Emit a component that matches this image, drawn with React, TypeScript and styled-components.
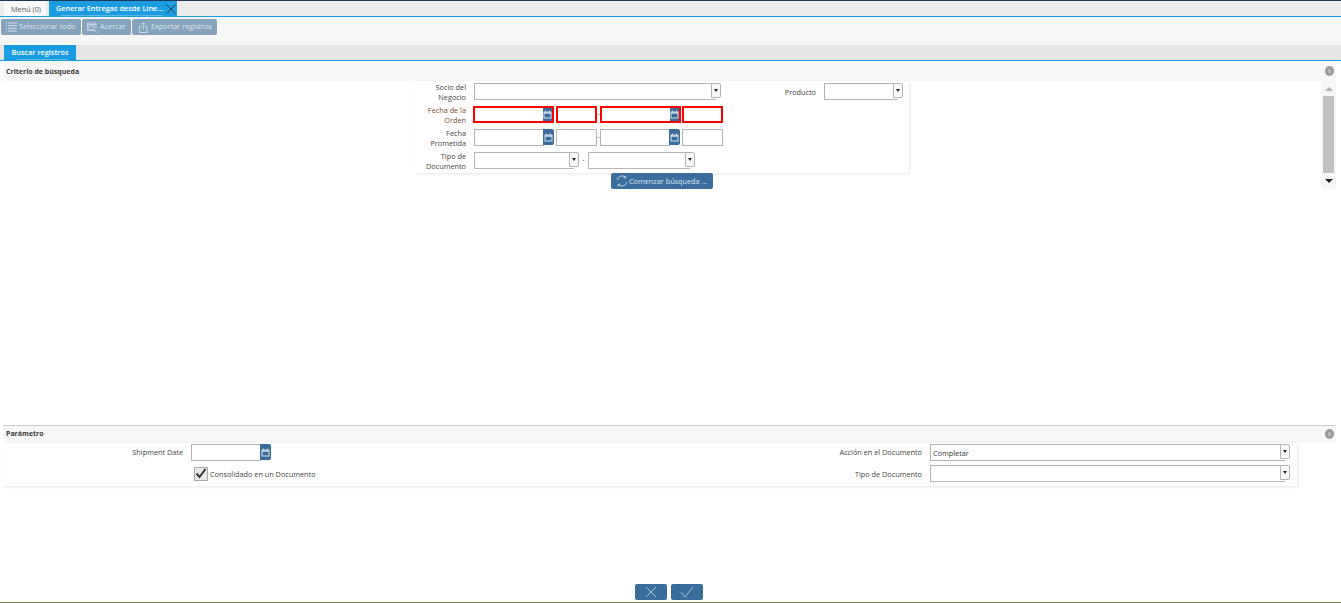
import React from "react";
import styled, { createGlobalStyle } from "styled-components";

const Global = createGlobalStyle`
  html, body { margin: 0; padding: 0; background: #fff; }
  body { font-family: "Open Sans", "Noto Sans", sans-serif; font-size: 7.3px; color: #333; }
  * { box-sizing: border-box; }
`;

const Page = styled.div`
  width: 1341px;
  height: 603px;
  display: flex;
  flex-direction: column;
  overflow: hidden;
  border-top: 1px solid #1d3a5c;
`;

const MainTabs = styled.div`
  height: 16px;
  flex: none;
  display: flex;
  gap: 3px;
  padding-left: 4px;
  background: #ececec;
  border-bottom: 1px solid #1a9ce0;
`;

const MainTab = styled.div<{ $active?: boolean }>`
  display: flex;
  align-items: center;
  justify-content: space-between;
  width: ${(p) => (p.$active ? "128px" : "42px")};
  padding-left: 7px;
  white-space: nowrap;
  background: ${(p) => (p.$active ? "#1a9ce0" : "#fafafa")};
  color: ${(p) => (p.$active ? "#fff" : "#555")};
  font-weight: ${(p) => (p.$active ? 600 : 400)};
  svg { margin-right: 1px; }
`;

const TabLabel = styled.span`
  position: relative;
  height: 100%;
  line-height: 14px;
  &::after {
    content: "";
    position: absolute;
    left: 5px;
    right: 0;
    bottom: 0;
    height: 1px;
    background: rgba(255, 255, 255, 0.3);
  }
`;

const Toolbar = styled.div`
  height: 28px;
  flex: none;
  display: flex;
  align-items: flex-start;
  gap: 1px;
  padding: 2px 0 0 1px;
  background: #f7f7f7;
`;

const ToolButton = styled.div<{ $w: number; $pad: number }>`
  width: ${(p) => p.$w}px;
  height: 16px;
  display: flex;
  align-items: center;
  gap: 2px;
  padding: 0 0 2px ${(p) => p.$pad}px;
  white-space: nowrap;
  background: #85a3bc;
  border-radius: 2px;
  color: #dfe8ef;
  svg { margin-top: 2px; }
`;

const SubTabs = styled.div`
  height: 16px;
  flex: none;
  padding-left: 4px;
  background: #e6e6e6;
  border-bottom: 1px solid #1a9ce0;
`;

const SubTab = styled.div`
  width: 72px;
  height: 15px;
  display: flex;
  justify-content: center;
  background: #1a9ce0;
  color: #fff;
  font-weight: 600;
`;

const SectionHeader = styled.div<{ $top?: boolean }>`
  height: ${(p) => (p.$top ? "18px" : "20px")};
  flex: none;
  margin: 0 5px 0 3px;
  padding: 0 0 ${(p) => (p.$top ? "2px" : "0")} 3px;
  display: flex;
  align-items: center;
  justify-content: space-between;
  background: #f7f7f7;
  font-weight: 700;
  font-size: 7px;
  color: #3a3a3a;
  border-top: ${(p) => (p.$top ? "1px solid #ccc" : "none")};
`;

const Badge = styled.span`
  width: 9px;
  height: 10px;
  margin-right: 2px;
  border-radius: 50%;
  background: #9a9a9a;
  color: #ccc;
  font-size: 5px;
  display: flex;
  align-items: center;
  justify-content: center;
`;

const SearchArea = styled.div`
  height: 344px;
  flex: none;
  display: flex;
`;

const SearchCenter = styled.div`
  flex: none;
  width: 1321px;
  display: flex;
  flex-direction: column;
  align-items: flex-start;
  padding-left: 416px;
`;

const FormCard = styled.div`
  width: 493px;
  height: 92px;
  padding: 2px 0 0 0;
  background: #fff;
  box-shadow: 1px 1px 3px rgba(0, 0, 0, 0.1);
  display: flex;
  flex-direction: column;
`;

const FormRow = styled.div<{ $h: number }>`
  display: flex;
  height: ${(p) => p.$h}px;
`;

const Label = styled.div<{ $w: number }>`
  width: ${(p) => p.$w}px;
  flex: none;
  margin-top: -1px;
  text-align: right;
  line-height: 10px;
  color: #444;
`;

const LabelRed = styled(Label)`
  margin-top: 0;
  color: #7a4a30;
`;

const InlineLabel = styled.div<{ $w: number }>`
  width: ${(p) => p.$w}px;
  flex: none;
  height: 17px;
  display: flex;
  align-items: center;
  justify-content: flex-end;
  color: #444;
`;

const Fields = styled.div<{ $red?: boolean }>`
  display: flex;
  align-items: flex-start;
  margin: ${(p) => (p.$red ? "1px 0 0 7px" : "0 0 0 8px")};
`;

const Input = styled.div<{ $w: number; $red?: boolean; $ml?: number }>`
  width: ${(p) => p.$w}px;
  height: 17px;
  margin-left: ${(p) => p.$ml ?? 0}px;
  flex: none;
  background: #fff;
  border: ${(p) => (p.$red ? "2px solid #f00" : "1px solid #b4b4b4")};
`;

const SelectBox = styled.div<{ $w: number }>`
  width: ${(p) => p.$w}px;
  height: 17px;
  flex: none;
  display: flex;
  align-items: flex-start;
`;

const SelectField = styled.div`
  flex: 1;
  height: 17px;
  border: 1px solid #b4b4b4;
  border-right: none;
  background: #fff;
  line-height: 16px;
  padding-left: 2px;
  color: #333;
`;

const SelectArrow = styled.div`
  position: relative;
  width: 10px;
  height: 15px;
  margin-left: -5px;
  flex: none;
  background: #fafafa;
  border: 1px solid #b4b4b4;
  border-radius: 0 2px 2px 0;
  display: flex;
  align-items: center;
  justify-content: center;
  &::after {
    content: "";
    border-left: 2.5px solid transparent;
    border-right: 2.5px solid transparent;
    border-top: 3px solid #222;
  }
`;

const DateBtn = styled.div<{ $red?: boolean }>`
  position: relative;
  width: ${(p) => (p.$red ? "9px" : "11px")};
  height: ${(p) => (p.$red ? "13px" : "16px")};
  margin: ${(p) => (p.$red ? "2px 2px 0 -11px" : "0 2px 0 -1px")};
  flex: none;
  overflow: hidden;
  background: #3a6c9c;
  border-radius: ${(p) => (p.$red ? "0" : "0 2px 2px 0")};
  display: flex;
  align-items: center;
  justify-content: center;
`;

const Dash = styled.span<{ $w: number }>`
  width: ${(p) => p.$w}px;
  flex: none;
  text-align: center;
  line-height: 14px;
  color: #555;
`;

const SearchButton = styled.div`
  margin-left: 195px;
  width: 102px;
  height: 16px;
  display: flex;
  align-items: center;
  gap: 1px;
  padding-left: 5px;
  white-space: nowrap;
  background: #3a6c9c;
  border-radius: 2px;
  color: #dfe8ef;
`;

const ScrollTrack = styled.div`
  width: 15px;
  height: 108px;
  flex: none;
  display: flex;
  flex-direction: column;
  align-items: center;
  background: #f7f7f7;
`;

const ScrollEnd = styled.div<{ $up?: boolean }>`
  height: ${(p) => (p.$up ? "15px" : "16px")};
  flex: none;
  display: flex;
  align-items: center;
  &::after {
    content: "";
    border-left: 4px solid transparent;
    border-right: 4px solid transparent;
    ${(p) => (p.$up ? "border-bottom: 4px solid #b0b0b0;" : "border-top: 4px solid #222;")}
  }
`;

const ScrollThumb = styled.div`
  width: 11px;
  flex: 1;
  background: #c1c1c1;
`;

const ParamArea = styled.div`
  height: 43px;
  flex: none;
  margin-left: 3px;
  width: 1294px;
  background: #fff;
  box-shadow: 1px 1px 3px rgba(0, 0, 0, 0.1);
  padding-top: 1px;
  display: grid;
  grid-template-columns: 188px 100px 639px 360px;
  grid-auto-rows: 21px;
`;

const ParamLeft = styled.div`
  display: flex;
  align-items: flex-start;
`;

const CheckRow = styled.div`
  display: flex;
  align-items: center;
  gap: 2px;
  margin-left: 3px;
  height: 17px;
  color: #444;
  white-space: nowrap;
`;

const CheckBox = styled.div`
  width: 14px;
  height: 14px;
  flex: none;
  background: #e8e8e8;
  border: 1px solid #aaa;
  display: flex;
  align-items: center;
  justify-content: center;
`;

const RightLabel = styled.div<{ $first?: boolean }>`
  height: 17px;
  padding: 0 8px ${(p) => (p.$first ? "1px" : "0")} 0;
  display: flex;
  align-items: center;
  justify-content: flex-end;
  color: #444;
`;

const Spacer = styled.div`
  flex: 1;
`;

const Footer = styled.div`
  height: 19px;
  flex: none;
  display: flex;
  justify-content: center;
  gap: 4px;
  padding-right: 3px;
  border-bottom: 1px solid #7a8a50;
`;

const FooterButton = styled.div`
  width: 32px;
  height: 16px;
  background: #3a6c9c;
  border-radius: 2px;
  display: flex;
  align-items: center;
  justify-content: center;
`;

const Calendar = () => (
  <svg width="9" height="9" viewBox="0 0 9 9" fill="none" stroke="#d5e0ea" style={{ flex: "none" }}>
    <rect x="1" y="2" width="7" height="6" />
    <path d="M1 3h7" strokeWidth="1.4" />
    <path d="M2.5 0.5v1.5M6.5 0.5v1.5" strokeWidth="0.8" />
  </svg>
);

const DateTime = ({ red }: { red?: boolean }) => (
  <>
    <Input $w={red ? 81 : 70} $red={red} />
    <DateBtn $red={red}>
      <Calendar />
    </DateBtn>
  </>
);

const Select = ({ w, text }: { w: number; text?: string }) => (
  <SelectBox $w={w}>
    <SelectField>{text}</SelectField>
    <SelectArrow />
  </SelectBox>
);

export default function App() {
  return (
    <Page>
      <Global />
      <MainTabs>
        <MainTab>Menú (0)</MainTab>
        <MainTab $active>
          <TabLabel>Generar Entregas desde Line...</TabLabel>
          <svg width="10" height="10" viewBox="0 0 10 10" stroke="#123" strokeWidth="0.8">
            <path d="M0.5 0.5l9 9M9.5 0.5l-9 9" />
          </svg>
        </MainTab>
      </MainTabs>
      <Toolbar>
        <ToolButton $w={80} $pad={4}>
          <svg width="12" height="10" viewBox="0 0 12 10" stroke="#dfe8ef" strokeWidth="0.9" fill="none">
            <path d="M1 1h1M3 1h9M1 3.7h1M3 3.7h9M1 6.3h1M3 6.3h9M1 9h1M3 9h9" />
          </svg>
          Seleccionar todo
        </ToolButton>
        <ToolButton $w={49} $pad={5}>
          <svg width="11" height="11" viewBox="0 0 11 11" stroke="#dfe8ef" strokeWidth="0.7" fill="none">
            <path d="M0.5 1h8.5v1.5H0.5zM0.5 2.5v6h6M9 2.5v4M2 4h5v4H2zM7 8l2.5 2.5" />
          </svg>
          Acercar
        </ToolButton>
        <ToolButton $w={85} $pad={7}>
          <svg width="10" height="11" viewBox="0 0 10 11" stroke="#dfe8ef" strokeWidth="0.8" fill="none">
            <path d="M2.5 4.5H0.5v6h7.5v-6H6M4.25 7.5V0.8M2.5 2.5l1.75-1.75L6 2.5" />
          </svg>
          Exportar registros
        </ToolButton>
      </Toolbar>
      <SubTabs>
        <SubTab>
          <TabLabel>Buscar registros</TabLabel>
        </SubTab>
      </SubTabs>
      <SectionHeader>
        Criterio de búsqueda
        <Badge>0</Badge>
      </SectionHeader>
      <SearchArea>
        <SearchCenter>
          <FormCard>
            <FormRow $h={22}>
              <Label $w={50}>Socio del Negocio</Label>
              <Fields>
                <Select w={247} />
              </Fields>
              <InlineLabel $w={95}>Producto</InlineLabel>
              <Fields>
                <Select w={79} />
              </Fields>
            </FormRow>
            <FormRow $h={24}>
              <LabelRed $w={50}>Fecha de la Orden</LabelRed>
              <Fields $red>
                <DateTime red />
                <Input $w={41} $red $ml={2} />
                <Dash $w={3}>-</Dash>
                <DateTime red />
                <Input $w={41} $red $ml={1} />
              </Fields>
            </FormRow>
            <FormRow $h={23}>
              <Label $w={50}>Fecha Prometida</Label>
              <Fields>
                <DateTime />
                <Input $w={41} />
                <Dash $w={3}>-</Dash>
                <DateTime />
                <Input $w={41} />
              </Fields>
            </FormRow>
            <FormRow $h={21}>
              <Label $w={50}>Tipo de Documento</Label>
              <Fields>
                <Select w={105} />
                <Dash $w={9}>-</Dash>
                <Select w={107} />
              </Fields>
            </FormRow>
          </FormCard>
          <SearchButton>
            <svg width="12" height="12" viewBox="0 0 12 12" fill="none" stroke="#c9d8e5" strokeWidth="0.9">
              <path d="M1.2 5A5 5 0 0 1 9.5 2.2M10.8 7A5 5 0 0 1 2.5 9.8M9.8 0.6v2.2H7.6M2.2 11.4V9.2h2.2" />
            </svg>
            Comenzar búsqueda ...
          </SearchButton>
        </SearchCenter>
        <ScrollTrack>
          <ScrollEnd $up />
          <ScrollThumb />
          <ScrollEnd />
        </ScrollTrack>
      </SearchArea>
      <SectionHeader $top>
        Parámetro
        <Badge>0</Badge>
      </SectionHeader>
      <ParamArea>
        <RightLabel $first>Shipment Date</RightLabel>
        <ParamLeft>
          <DateTime />
        </ParamLeft>
        <RightLabel $first>Acción en el Documento</RightLabel>
        <Select w={360} text="Completar" />
        <div />
        <CheckRow>
          <CheckBox>
            <svg width="12" height="11" viewBox="0 0 12 11" fill="none" stroke="#333" strokeWidth="2">
              <path d="M1.5 5.5l3 3.5 6-8" />
            </svg>
          </CheckBox>
          Consolidado en un Documento
        </CheckRow>
        <RightLabel>Tipo de Documento</RightLabel>
        <Select w={360} />
      </ParamArea>
      <Spacer />
      <Footer>
        <FooterButton>
          <svg width="12" height="12" viewBox="0 0 12 12" stroke="#c9d8e5" strokeWidth="0.8">
            <path d="M1 1l10 10M11 1L1 11" />
          </svg>
        </FooterButton>
        <FooterButton>
          <svg width="14" height="12" viewBox="0 0 14 12" fill="none" stroke="#c9d8e5" strokeWidth="0.8">
            <path d="M1 6l4 5 8-10" />
          </svg>
        </FooterButton>
      </Footer>
    </Page>
  );
}
